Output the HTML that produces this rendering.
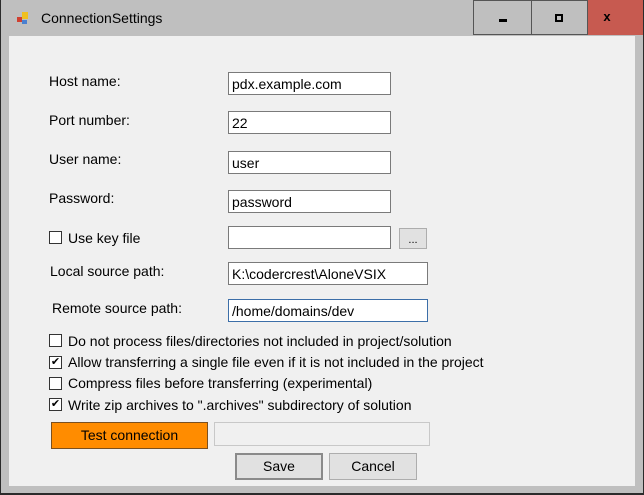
<html><head><style>
body{margin:0;width:644px;height:495px;background:#2b2b2b;font-family:"Liberation Sans",sans-serif;font-size:14px;color:#000;position:relative;overflow:hidden}
.a{position:absolute}
.win{left:1px;top:0;width:642px;height:493px;background:#bfbfbf}
.client{left:9px;top:36px;width:626px;height:450px;background:#f0f0f0}
.tb{background:#fff;border:1px solid #7a7a7a;box-sizing:border-box;height:23px;padding:3px 3px;line-height:16px;font-size:14px}
.cb{width:13px;height:13px;border:1px solid #333;background:#fff;box-sizing:border-box}
.btn{box-sizing:border-box;text-align:center;background:#e1e1e1;border:1px solid #adadad}
.ck{font-size:11px;line-height:11px;text-align:center}
</style></head><body>
<div class="a win"></div>
<div class="a" style="left:473px;top:0;width:59px;height:35px;border:1px solid #555;box-sizing:border-box"></div>
<div class="a" style="left:532px;top:0;width:56px;height:35px;border:1px solid #555;border-left:0;box-sizing:border-box"></div>
<div class="a" style="left:588px;top:0;width:55px;height:35px;background:#c75a50"></div>
<div class="a" style="left:499px;top:19px;width:8px;height:3px;background:#000"></div>
<div class="a" style="left:555px;top:14px;width:8px;height:8px;border:2px solid #000;box-sizing:border-box"></div>
<div class="a" style="left:599px;top:9px;width:16px;font-weight:bold;font-size:13px;text-align:center">x</div>
<div class="a" style="left:17px;top:17px;width:5px;height:5px;background:#d04030"></div>
<div class="a" style="left:22px;top:12px;width:6px;height:7px;background:#f0c020"></div>
<div class="a" style="left:22px;top:20px;width:5px;height:4px;background:#4a80d0"></div>
<div class="a" style="left:41px;top:10px;font-size:14px">ConnectionSettings</div>
<div class="a client"></div>

<div class="a" style="left:49px;top:73px">Host name:</div>
<div class="a tb" style="left:228px;top:72px;width:163px">pdx.example.com</div>
<div class="a" style="left:49px;top:112px">Port number:</div>
<div class="a tb" style="left:228px;top:111px;width:163px">22</div>
<div class="a" style="left:49px;top:151px">User name:</div>
<div class="a tb" style="left:228px;top:151px;width:163px">user</div>
<div class="a" style="left:49px;top:190px">Password:</div>
<div class="a tb" style="left:228px;top:190px;width:163px">password</div>
<div class="a cb" style="left:49px;top:231px"></div>
<div class="a" style="left:68px;top:230px">Use key file</div>
<div class="a tb" style="left:228px;top:226px;width:163px"></div>
<div class="a btn" style="left:399px;top:228px;width:28px;height:21px;line-height:22px;font-size:11px">...</div>
<div class="a" style="left:50px;top:263px">Local source path:</div>
<div class="a tb" style="left:228px;top:262px;width:200px">K:\codercrest\AloneVSIX</div>
<div class="a" style="left:52px;top:300px">Remote source path:</div>
<div class="a tb" style="left:228px;top:299px;width:200px;border-color:#3c6ea8">/home/domains/dev</div>

<div class="a cb" style="left:49px;top:334px"></div>
<div class="a" style="left:68px;top:333px">Do not process files/directories not included in project/solution</div>
<div class="a cb ck" style="left:49px;top:356px">✔</div>
<div class="a" style="left:68px;top:354px">Allow transferring a single file even if it is not included in the project</div>
<div class="a cb" style="left:49px;top:377px"></div>
<div class="a" style="left:68px;top:375px">Compress files before transferring (experimental)</div>
<div class="a cb ck" style="left:49px;top:398px">✔</div>
<div class="a" style="left:68px;top:397px">Write zip archives to ".archives" subdirectory of solution</div>

<div class="a btn" style="left:51px;top:422px;width:157px;height:27px;background:#ff8c00;border-color:#7a5020;line-height:25px">Test connection</div>
<div class="a" style="left:214px;top:422px;width:216px;height:24px;border:1px solid #c8c8c8;box-sizing:border-box;background:#f0f0f0"></div>
<div class="a btn" style="left:235px;top:453px;width:88px;height:27px;border:2px solid #8a8a8a;line-height:23px">Save</div>
<div class="a btn" style="left:329px;top:453px;width:88px;height:27px;line-height:25px">Cancel</div>
</body></html>
